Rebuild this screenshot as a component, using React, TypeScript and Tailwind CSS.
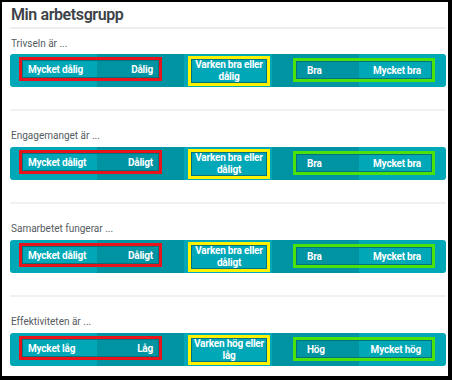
type Row = {
  label: string
  low: [string, string]
  mid: string
  high: [string, string]
}

const rows: Row[] = [
  { label: 'Trivseln är ...', low: ['Mycket dålig', 'Dålig'], mid: 'Varken bra eller dålig', high: ['Bra', 'Mycket bra'] },
  { label: 'Engagemanget är ...', low: ['Mycket dåligt', 'Dåligt'], mid: 'Varken bra eller dåligt', high: ['Bra', 'Mycket bra'] },
  { label: 'Samarbetet fungerar ...', low: ['Mycket dåligt', 'Dåligt'], mid: 'Varken bra eller dåligt', high: ['Bra', 'Mycket bra'] },
  { label: 'Effektiviteten är ...', low: ['Mycket låg', 'Låg'], mid: 'Varken hög eller låg', high: ['Hög', 'Mycket hög'] },
]

const font = { fontFamily: '"Roboto", "Liberation Sans", sans-serif' }

const ScaleBar: React.FC<{ row: Row }> = ({ row }) => {
  return (
    <div className="relative h-[33px] rounded-[3px] overflow-hidden">
      <div className="absolute inset-0 grid grid-cols-5">
        <div className="bg-[#00a8b7]" />
        <div className="bg-[#0094a3]" />
        <div className="bg-[#00a8b7]" />
        <div className="bg-[#0094a3]" />
        <div className="bg-[#00a8b7]" />
      </div>
      <div className="relative flex items-start h-full pl-[9px] pt-[2px] text-[10px] font-bold text-white tracking-[-0.2px]">
        <div className="mt-[1px] w-[143px] h-[24px] border-[3px] border-[#e8141c]">
          <div className="h-full border border-[#00727d] flex items-center justify-between px-[5px]">
            <span>{row.low[0]}</span>
            <span>{row.low[1]}</span>
          </div>
        </div>
        <div className="ml-[26px] w-[82px] h-[30px] border-[3px] border-[#fff200]">
          <div className="h-full border border-[#00727d] flex items-center justify-center text-center leading-[12px]">
            <span>{row.mid}</span>
          </div>
        </div>
        <div className="ml-[23px] mt-[2px] w-[142px] h-[24px] border-[3px] border-[#4be10b]">
          <div className="h-full border border-[#00727d] flex items-center justify-between px-[10px]">
            <span>{row.high[0]}</span>
            <span>{row.high[1]}</span>
          </div>
        </div>
      </div>
    </div>
  )
}

const App: React.FC = () => {
  return (
    <div
      className="w-[452px] h-[380px] bg-white border-black border-l-2 border-t-2 border-r-4 border-b-4 overflow-hidden"
      style={font}
    >
      <div className="pl-2 pr-0.5">
        <h1 className="pt-[3px] text-[16px] leading-[20px] font-semibold tracking-[-0.4px] text-[#3c4248] pl-px">
          Min arbetsgrupp
        </h1>
        <div className="mt-[2px] h-[2px] bg-[#eeeeee]" />
        {rows.map((row, i) => (
          <div key={row.label}>
            {i > 0 && <div className="mt-[22px] h-[2px] bg-[#f1f1f1]" />}
            <p className={`${i > 0 ? 'mt-[18px]' : 'mt-[8px]'} text-[10px] leading-[14px] text-[#555b60] pl-px`}>
              {row.label}
            </p>
            <div className={i > 0 ? 'mt-[4px]' : 'mt-[3px]'}>
              <ScaleBar row={row} />
            </div>
          </div>
        ))}
      </div>
    </div>
  )
}

export default App
